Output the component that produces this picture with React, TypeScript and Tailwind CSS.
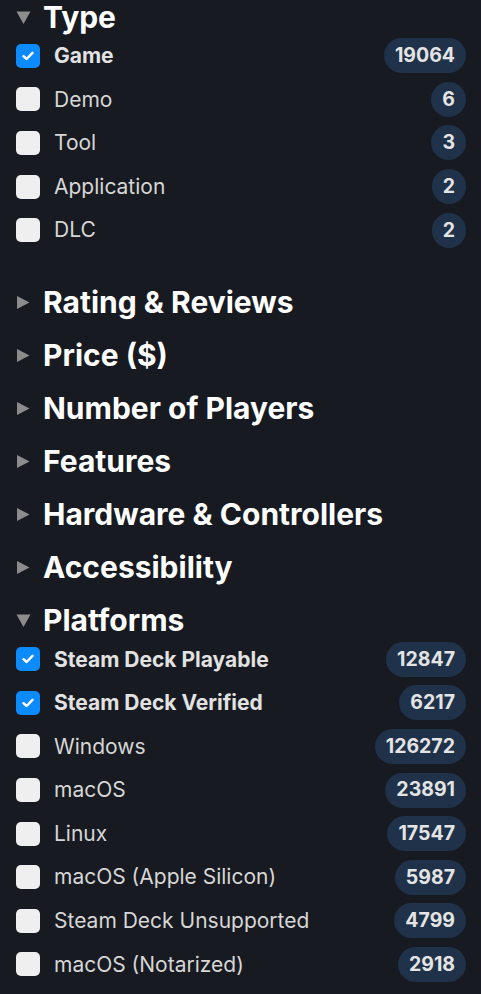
import React from "react";

type Item = { label: string; count: number; checked?: boolean };

const TYPES: Item[] = [
  { label: "Game", count: 19064, checked: true },
  { label: "Demo", count: 6 },
  { label: "Tool", count: 3 },
  { label: "Application", count: 2 },
  { label: "DLC", count: 2 },
];

const PLATFORMS: Item[] = [
  { label: "Steam Deck Playable", count: 12847, checked: true },
  { label: "Steam Deck Verified", count: 6217, checked: true },
  { label: "Windows", count: 126272 },
  { label: "macOS", count: 23891 },
  { label: "Linux", count: 17547 },
  { label: "macOS (Apple Silicon)", count: 5987 },
  { label: "Steam Deck Unsupported", count: 4799 },
  { label: "macOS (Notarized)", count: 2918 },
];

const CLOSED = [
  "Rating & Reviews",
  "Price ($)",
  "Number of Players",
  "Features",
  "Hardware & Controllers",
  "Accessibility",
];

function Triangle({ open }: { open: boolean }) {
  return (
    <svg width="15" height="15" viewBox="0 0 15 15" className="shrink-0">
      {open ? (
        <polygon points="0.5,1.5 14.5,1.5 7.5,14" fill="#8c8c8c" />
      ) : (
        <polygon points="1,1 13.5,7.5 1,14" fill="#8c8c8c" />
      )}
    </svg>
  );
}

function Heading({ title, open }: { title: string; open: boolean }) {
  return (
    <div className="flex h-[34px] items-center gap-3 pl-4">
      <Triangle open={open} />
      <span className="text-[30px] font-bold leading-[34px] text-white">{title}</span>
    </div>
  );
}

function Checkbox({ checked }: { checked?: boolean }) {
  if (checked) {
    return (
      <span className="flex h-6 w-6 shrink-0 items-center justify-center rounded-[5px] bg-[#0c8bff]">
        <svg width="12" height="10" viewBox="0 0 12 10">
          <path d="M1.5 5.2 L4.6 8 L10.5 1.8" stroke="white" strokeWidth="2.4" fill="none" strokeLinecap="round" strokeLinejoin="round" />
        </svg>
      </span>
    );
  }
  return <span className="h-6 w-6 shrink-0 rounded-[5px] bg-[#efefef]" />;
}

function Row({ item }: { item: Item }) {
  return (
    <div className="flex h-[43.6px] items-center pl-4 pr-[15px]">
      <Checkbox checked={item.checked} />
      <span
        className={
          item.checked
            ? "ml-[14px] flex-1 text-[21px] font-bold text-[#e2e2e2]"
            : "ml-[14px] flex-1 text-[21px] text-[#d6d6d6]"
        }
      >
        {item.label}
      </span>
      <span className="flex h-[35px] min-w-[33px] items-center justify-center rounded-full bg-[#1f3249] px-[11px] text-[19.5px] font-bold text-[#e4e4e4]">
        {item.count}
      </span>
    </div>
  );
}

export default function App() {
  return (
    <div
      className="min-h-screen w-full bg-[#171a21]"
      style={{ fontFamily: "Inter, 'Noto Sans', sans-serif" }}
    >
      <Heading title="Type" open />
      <div className="pb-[14.5px]">
        {TYPES.map((t) => (
          <Row key={t.label} item={t} />
        ))}
      </div>
      <div className="flex flex-col gap-[19px] pt-[19px]">
        {CLOSED.map((c) => (
          <Heading key={c} title={c} open={false} />
        ))}
        <div>
          <Heading title="Platforms" open />
          {PLATFORMS.map((p) => (
            <Row key={p.label} item={p} />
          ))}
        </div>
      </div>
    </div>
  );
}
